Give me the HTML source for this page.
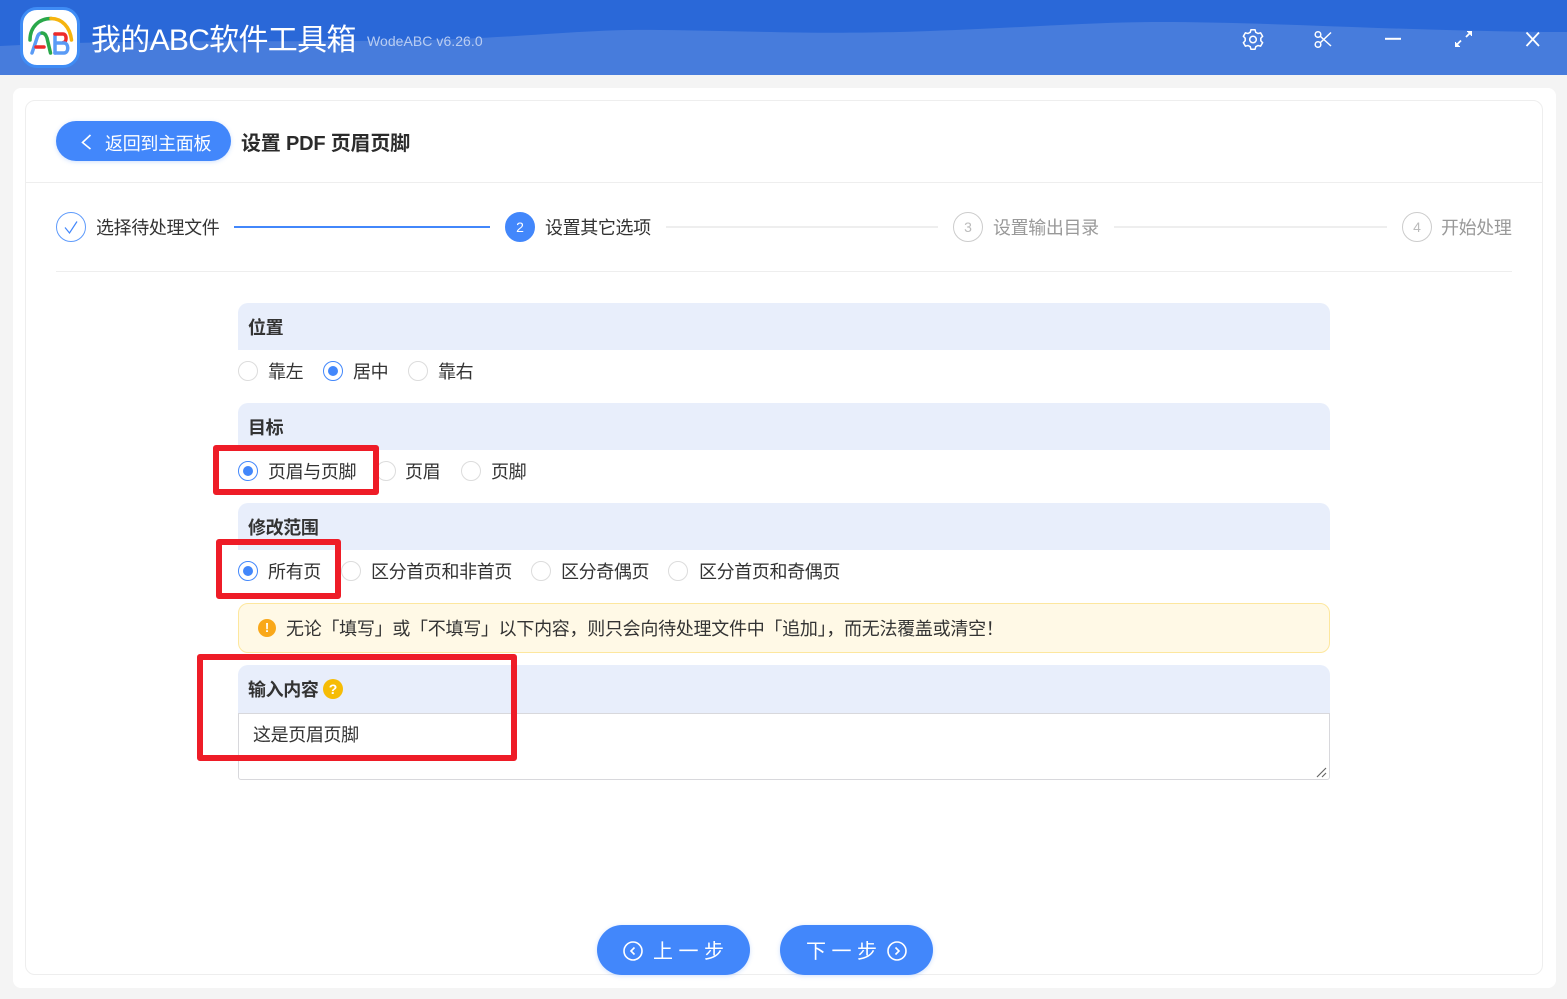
<!DOCTYPE html>
<html><head><meta charset="utf-8">
<style>
*{box-sizing:border-box}
html,body{margin:0;padding:0}
body{width:1567px;height:999px;overflow:hidden;background:#f4f4f4;position:relative;font-family:"Liberation Sans","Noto Sans CJK SC",sans-serif;color:#333}
.a{position:absolute;white-space:nowrap}
.t{font-size:18px;line-height:24px;letter-spacing:-.38px;margin-top:1px}
.b{font-weight:bold;color:#333}
.sec{position:absolute;left:238px;width:1092px;height:47px;background:#e8eefb;border-radius:10px 10px 0 0}
.r{position:absolute;width:20px;height:20px;border-radius:50%;border:1px solid #dcdcdc;background:#fff}
.r.on{border-color:#4287fb}
.r.on:after{content:"";position:absolute;left:4px;top:4px;width:10px;height:10px;border-radius:50%;background:#4287fb}
.redb{position:absolute;border:6px solid #ee1c27;border-radius:3px}
.step{position:absolute;top:212px;width:30px;height:30px;border-radius:50%;border:1px solid #ccc;color:#bbb;text-align:center;font-size:14px;line-height:28px}
.ln{position:absolute;top:226px;height:2px;background:#eee}
.btn{position:absolute;background:#4287fb;border-radius:25px;color:#fff;box-shadow:0 1px 4px rgba(66,135,251,.25)}
</style></head><body>
<svg class="a" style="left:0;top:0" width="1567" height="75" viewBox="0 0 1567 75">
<rect width="1567" height="75" fill="#2a68d8"/>
<path d="M0 46C160 37 340 45 480 38C560 34 600 29 660 30C760 31 820 35 930 31C1020 28 1090 22 1160 22C1280 22 1420 32 1567 32V75H0Z" fill="#477cdc"/>
</svg>
<div class="a" style="left:20px;top:7px;width:60px;height:61px;border-radius:17px;background:#fff;border:3px solid #3f8cf5"></div>
<svg class="a" style="left:20px;top:7px" width="60" height="61" viewBox="0 0 60 61" fill="none" stroke-linecap="round">
<path d="M10 33C10 20 19 11.500 31 11.500" stroke="#2aa84a" stroke-width="3.500"/>
<path d="M31 11.500C42 11.500 50 20 51.500 33" stroke="#f6b40e" stroke-width="3.500"/>
<path d="M12 46L17 31C18 27.500 20 26 22 26" stroke="#5a9bf6" stroke-width="3.500"/>
<path d="M22 26C24.500 26 26 28 27 31L30.500 46" stroke="#2aa84a" stroke-width="3.500"/>
<path d="M16 40H24" stroke="#ee2a2a" stroke-width="3.500"/>
<path d="M35 27V46" stroke="#5a9bf6" stroke-width="3.500"/>
<path d="M35 27H43C47 27 47 35 43.500 35.500" stroke="#ee2a2a" stroke-width="3.500"/>
<path d="M36 36H44C49 36 49 46 44 46H35" stroke="#5a9bf6" stroke-width="3.500"/>
</svg>
<div class="a" style="left:91px;top:20px;font-size:30px;line-height:42px;color:#fff;letter-spacing:-.7px">我的ABC软件工具箱</div>
<div class="a" style="left:367px;top:31px;font-size:14px;line-height:20px;color:#b9cdf2;letter-spacing:.05px">WodeABC v6.26.0</div>

<svg class="a" style="left:1240px;top:26px" width="300" height="26" viewBox="0 0 300 26" fill="none" stroke="#fff" stroke-width="1.500">
<path d="M11 3.800H15L15.800 6.300L18 7.500L20.600 6.900L22.600 10.300L20.800 12.300V14.700L22.600 16.700L20.600 20.100L18 19.500L15.800 20.700L15 23.200H11L10.200 20.700L8 19.500L5.400 20.100L3.400 16.700L5.200 14.700V12.300L3.400 10.300L5.400 6.900L8 7.500L10.200 6.300Z"/>
<circle cx="13" cy="13.500" r="3.300"/>
<circle cx="78" cy="8.500" r="2.800"/><circle cx="78" cy="18.500" r="2.800"/>
<path d="M80.500 10.500L91 20M80.500 16.500L91 6.500"/>
<path d="M145 12.800H161" stroke-width="2"/>
<path d="M216 19.500L221 14.500M226 11L231 6" stroke-width="1.800"/>
<path d="M215.500 16V20.500H220M227 5.500H231.500V10" fill="#fff" stroke-width="1"/>
<path d="M286.500 6.500L299 20M299 6.500L286.500 20" stroke-width="1.800"/>
</svg>

<div class="a" style="left:13px;top:88px;width:1543px;height:900px;background:#fff;border-radius:8px"></div>
<div class="a" style="left:25px;top:100px;width:1518px;height:875px;background:#fff;border:1px solid #eee;border-radius:10px"></div>
<div class="a" style="left:26px;top:182px;width:1516px;height:1px;background:#eee"></div>

<div class="btn" style="left:56px;top:121px;width:175px;height:40px"></div>
<svg class="a" style="left:78px;top:132px" width="18" height="20" fill="none" stroke="#fff" stroke-width="1.600"><path d="M12.500 3L4.500 10.500L12.500 17"/></svg>
<div class="a t" style="left:105px;top:131px;color:#fff;letter-spacing:-.3px">返回到主面板</div>
<div class="a b" style="left:241px;top:130px;font-size:20px;line-height:28px;color:#2b2b2b;letter-spacing:-.2px">设置 PDF 页眉页脚</div>

<div class="a" style="left:56px;top:212px;width:30px;height:30px;border-radius:50%;border:1px solid #5f9bfb"></div>
<svg class="a" style="left:56px;top:212px" width="30" height="30" fill="none" stroke="#4287fb" stroke-width="1.200"><path d="M9 15.500L13.500 21L21 9.500"/></svg>
<div class="a t" style="left:96px;top:215px">选择待处理文件</div>
<div class="ln" style="left:234px;width:256px;background:#4287fb"></div>
<div class="step" style="left:505px;background:#4287fb;border-color:#4287fb;color:#fff">2</div>
<div class="a t" style="left:545px;top:215px">设置其它选项</div>
<div class="ln" style="left:666px;width:272px"></div>
<div class="step" style="left:953px">3</div>
<div class="a t" style="left:993px;top:215px;color:#999">设置输出目录</div>
<div class="ln" style="left:1114px;width:273px"></div>
<div class="step" style="left:1402px">4</div>
<div class="a t" style="left:1441px;top:215px;color:#999">开始处理</div>
<div class="a" style="left:56px;top:271px;width:1456px;height:1px;background:#eee"></div>

<div class="sec" style="top:303px"></div>
<div class="a t b" style="left:248px;top:315px">位置</div>
<div class="r" style="left:238px;top:361px"></div><div class="a t" style="left:268px;top:359px">靠左</div>
<div class="r on" style="left:323px;top:361px"></div><div class="a t" style="left:353px;top:359px">居中</div>
<div class="r" style="left:408px;top:361px"></div><div class="a t" style="left:438px;top:359px">靠右</div>

<div class="sec" style="top:403px"></div>
<div class="a t b" style="left:248px;top:415px">目标</div>
<div class="r" style="left:376px;top:461px"></div><div class="a t" style="left:405px;top:459px">页眉</div>
<div class="r" style="left:461px;top:461px"></div><div class="a t" style="left:491px;top:459px">页脚</div>
<div class="redb" style="left:213px;top:445px;width:166px;height:50px"></div>
<div class="r on" style="left:238px;top:461px"></div><div class="a t" style="left:268px;top:459px">页眉与页脚</div>

<div class="sec" style="top:503px"></div>
<div class="a t b" style="left:248px;top:515px">修改范围</div>
<div class="r" style="left:341px;top:561px"></div><div class="a t" style="left:371px;top:559px">区分首页和非首页</div>
<div class="r" style="left:531px;top:561px"></div><div class="a t" style="left:561px;top:559px">区分奇偶页</div>
<div class="r" style="left:668px;top:561px"></div><div class="a t" style="left:699px;top:559px">区分首页和奇偶页</div>
<div class="redb" style="left:216px;top:539px;width:125px;height:60px"></div>
<div class="r on" style="left:238px;top:561px"></div><div class="a t" style="left:268px;top:559px">所有页</div>

<div class="a" style="left:238px;top:603px;width:1092px;height:50px;background:#fff9e6;border:1px solid #fde79e;border-radius:10px"></div>
<div class="a" style="left:258px;top:619px;width:18px;height:18px;border-radius:50%;background:#f9a81a;color:#fff;font-size:13px;line-height:18px;text-align:center;font-weight:bold">!</div>
<div class="a t" style="left:286px;top:616px;letter-spacing:-.28px">无论「填写」或「不填写」以下内容，则只会向待处理文件中「追加」，而无法覆盖或清空！</div>

<div class="sec" style="top:665px;height:48px"></div>
<div class="a t b" style="left:248px;top:677px">输入内容</div>
<div class="a" style="left:323px;top:679px;width:20px;height:20px;border-radius:50%;background:#f6bc05;color:#fff;font-size:14px;line-height:20px;text-align:center;font-weight:bold">?</div>
<div class="a" style="left:238px;top:713px;width:1092px;height:67px;background:#fff;border:1px solid #d8d8dc;border-radius:0 0 3px 3px"></div>
<div class="a t" style="left:253px;top:722px">这是页眉页脚</div>
<svg class="a" style="left:1315px;top:765px" width="13" height="13" stroke="#666" stroke-width="1.200"><path d="M2 12L11 3M7 12L11 8"/></svg>
<div class="redb" style="left:197px;top:654px;width:320px;height:107px"></div>

<div class="btn" style="left:597px;top:925px;width:153px;height:50px"></div>
<svg class="a" style="left:622px;top:940px" width="22" height="22" fill="none" stroke="#fff" stroke-width="1.600"><circle cx="11" cy="11" r="9"/><path d="M12.500 7.500L9 11L12.500 14.500"/></svg>
<div class="a" style="left:653px;top:938px;color:#fff;font-size:20px;line-height:28px;letter-spacing:5.500px">上一步</div>
<div class="btn" style="left:780px;top:925px;width:153px;height:50px"></div>
<div class="a" style="left:806px;top:938px;color:#fff;font-size:20px;line-height:28px;letter-spacing:5.500px">下一步</div>
<svg class="a" style="left:886px;top:940px" width="22" height="22" fill="none" stroke="#fff" stroke-width="1.600"><circle cx="11" cy="11" r="9"/><path d="M9.500 7.500L13 11L9.500 14.500"/></svg>
</body></html>
